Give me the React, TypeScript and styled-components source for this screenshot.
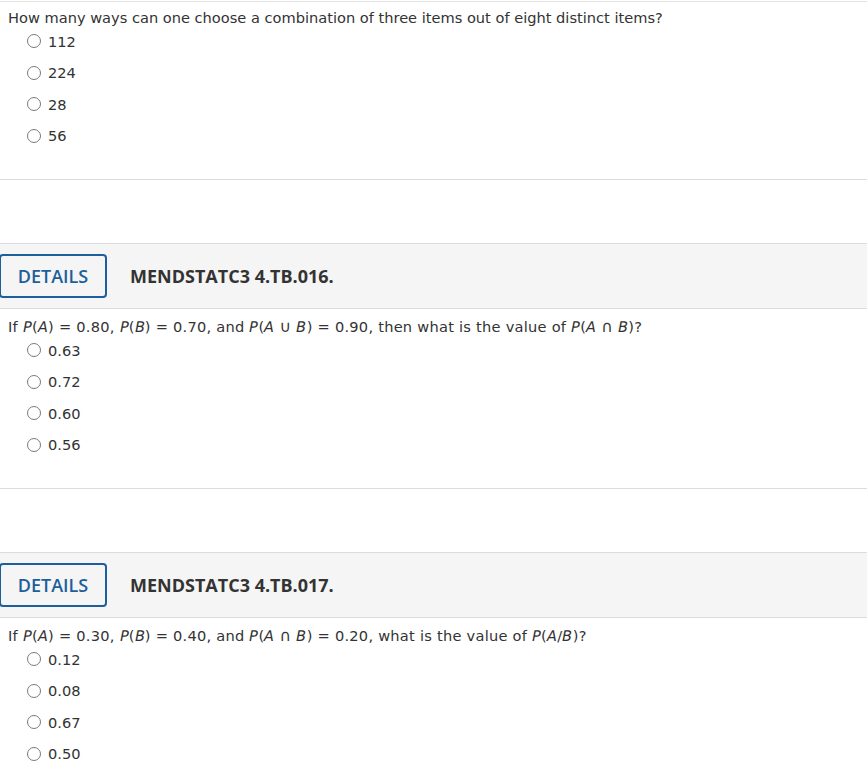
import React from "react";
import styled, { createGlobalStyle } from "styled-components";

const Global = createGlobalStyle`
  html, body { margin: 0; padding: 0; background: #fff; }
  body { font-family: "DejaVu Sans", Verdana, sans-serif; color: #333; }
`;

const Page = styled.div`
  width: 867px;
  padding-top: 1px;
`;

const Section = styled.section<{ $first?: boolean }>`
  border-bottom: 1px solid #dcdcdc;
  ${(p) => (p.$first ? "border-top: 1px solid #e2e2e2;" : "")}
  margin-bottom: 63px;
`;

const Header = styled.div`
  display: flex;
  align-items: center;
  height: 64px;
  background: #f5f5f5;
  border-top: 1px solid #dcdcdc;
  border-bottom: 1px solid #dcdcdc;
`;

const DetailsButton = styled.button`
  box-sizing: border-box;
  height: 44px;
  width: 108px;
  margin-left: -1px;
  background: #f5f5f5;
  border: 2px solid #1d5f9a;
  border-radius: 4px;
  color: #1d5f9a;
  font-family: "Open Sans", sans-serif;
  font-size: 18px;
  font-weight: 600;
  padding: 0;
`;

const Ref = styled.span`
  margin-left: 23px;
  font-family: "Open Sans", sans-serif;
  font-size: 18px;
  font-weight: 700;
  color: #333;
`;

const Body = styled.div<{ $first?: boolean }>`
  padding: ${(p) => (p.$first ? "6px" : "8px")} 0 33.5px 8px;
`;

const Prompt = styled.div<{ $math?: boolean }>`
  font-size: 14.6px;
  line-height: 20px;
  color: #333;
  white-space: nowrap;
  letter-spacing: ${(p) => (p.$math ? "0.25px" : "0")};
`;

const Options = styled.div`
  display: flex;
  flex-direction: column;
  gap: 11.5px;
  padding-top: 3px;
  padding-left: 19px;
`;

const Option = styled.label`
  display: flex;
  align-items: center;
  height: 20px;
  font-size: 14.6px;
  color: #333;
`;

const Radio = styled.span`
  box-sizing: border-box;
  width: 14px;
  height: 14px;
  border: 1px solid #7a7a7a;
  border-radius: 50%;
  margin-right: 7px;
  background: #fff;
`;

const I = styled.span`
  display: inline-block;
  transform: skewX(-11deg);
`;

const Op = styled.span`
  font-size: 16px;
`;

type Q = {
  id?: string;
  prompt: React.ReactNode;
  options: string[];
};

const questions: Q[] = [
  {
    prompt:
      "How many ways can one choose a combination of three items out of eight distinct items?",
    options: ["112", "224", "28", "56"],
  },
  {
    id: "MENDSTATC3 4.TB.016.",
    prompt: (
      <>
        If <I>P</I>(<I>A</I>) = 0.80, <I>P</I>(<I>B</I>) = 0.70, and <I>P</I>(<I>A</I>{" "}
        <Op>∪</Op> <I>B</I>) = 0.90, then what is the value of <I>P</I>(<I>A</I>{" "}
        <Op>∩</Op> <I>B</I>)?
      </>
    ),
    options: ["0.63", "0.72", "0.60", "0.56"],
  },
  {
    id: "MENDSTATC3 4.TB.017.",
    prompt: (
      <>
        If <I>P</I>(<I>A</I>) = 0.30, <I>P</I>(<I>B</I>) = 0.40, and <I>P</I>(<I>A</I>{" "}
        <Op>∩</Op> <I>B</I>) = 0.20, what is the value of <I>P</I>(<I>A</I>/<I>B</I>)?
      </>
    ),
    options: ["0.12", "0.08", "0.67", "0.50"],
  },
];

export default function App() {
  return (
    <Page>
      <Global />
      {questions.map((q, i) => (
        <Section key={i} $first={!q.id}>
          {q.id && (
            <Header>
              <DetailsButton>DETAILS</DetailsButton>
              <Ref>{q.id}</Ref>
            </Header>
          )}
          <Body $first={!q.id}>
            <Prompt $math={!!q.id}>{q.prompt}</Prompt>
            <Options>
              {q.options.map((o) => (
                <Option key={o}>
                  <Radio />
                  {o}
                </Option>
              ))}
            </Options>
          </Body>
        </Section>
      ))}
    </Page>
  );
}
